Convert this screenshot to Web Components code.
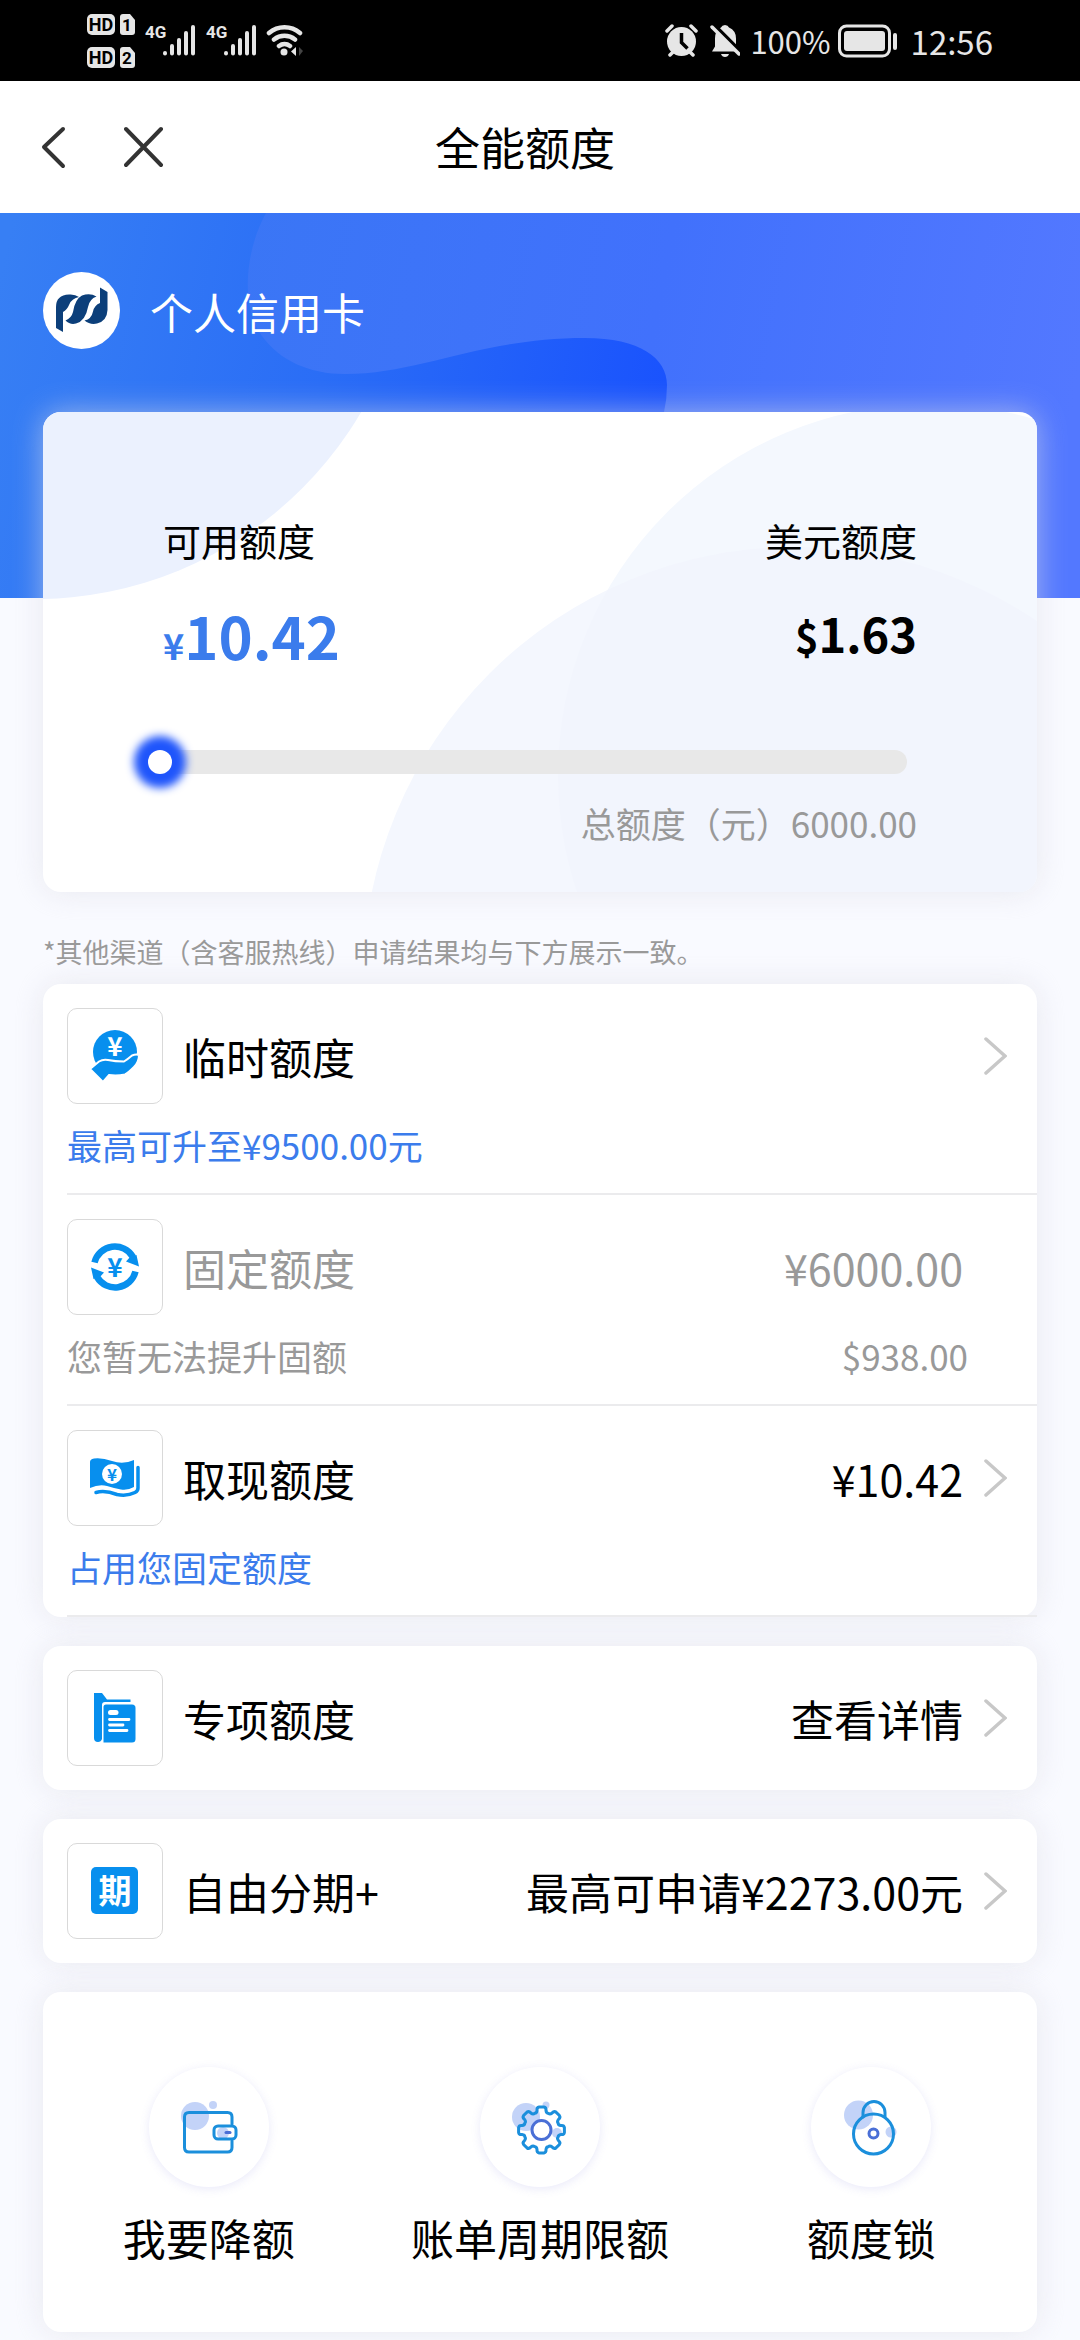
<!DOCTYPE html>
<html lang="zh-CN">
<head>
<meta charset="utf-8">
<meta name="viewport" content="width=device-width, initial-scale=1">
<title>全能额度</title>
<style>
  :root {
    --blue: #3b7cec;
    --icon: #078fee;
    --muted: #999;
    --card-shadow: 0 0 30px rgba(222, 222, 228, .6);
  }
  body {
    margin: 0;
    background: #f9faff;
    color: #000;
    font-family: "Noto Sans CJK SC", sans-serif;
    font-size: 43px;
  }
  main { display: flex; flex-direction: column; }
  .list { display: flex; flex-direction: column; gap: 29px; padding: 0 43px 8px; }
  .note { margin: 40px 43px 12px; font-size: 27px; line-height: 40px; color: var(--muted); }
</style>
</head>
<body>
<status-bar></status-bar>
<nav-bar>全能额度</nav-bar>
<main>
  <limit-hero>
    <span slot="name">个人信用卡</span>
    <limit-card available="10.42" usd="1.63" total="6000.00"></limit-card>
  </limit-hero>
  <p class="note">*其他渠道（含客服热线）申请结果均与下方展示一致。</p>
  <div class="list">
    <card-group>
      <limit-row icon="hand" link divided>临时额度<span slot="sub">最高可升至¥9500.00元</span></limit-row>
      <limit-row icon="cycle" muted divided>固定额度<span slot="value">¥6000.00</span><span slot="sub">您暂无法提升固额</span><span slot="subvalue">$938.00</span></limit-row>
      <limit-row icon="cash" link divided>取现额度<span slot="value">¥10.42</span><span slot="sub">占用您固定额度</span></limit-row>
    </card-group>
    <card-group>
      <limit-row icon="folder" link>专项额度<span slot="value">查看详情</span></limit-row>
    </card-group>
    <card-group>
      <limit-row icon="period" link>自由分期+<span slot="value">最高可申请¥2273.00元</span></limit-row>
    </card-group>
    <card-group>
      <tool-grid>
        <tool-item icon="wallet">我要降额</tool-item>
        <tool-item icon="gear">账单周期限额</tool-item>
        <tool-item icon="lock">额度锁</tool-item>
      </tool-grid>
    </card-group>
  </div>
</main>

<script>
class BaseElement extends HTMLElement {
  connectedCallback() {
    if (this.shadowRoot) return;
    const root = this.attachShadow({ mode: 'open' });
    root.innerHTML = '<style>*{box-sizing:border-box}svg{display:block}' + this.styles() + '</style>' + this.markup();
  }
}

const signal = x => `
  <text x="${x}" y="38" font-size="17">4G</text>
  <g stroke="#e6e6e6" stroke-width="4" stroke-linecap="round">
    <path d="M${x + 20} 53v.5M${x + 27} 46v7.5M${x + 34} 40v13.5M${x + 41} 33v20.5M${x + 48} 27v26.5"/>
  </g>`;
const sim = (y, n) => `
  <rect x="0" y="${y}" width="28" height="21" rx="5"/>
  <path d="M36 ${y}h7l5 6v12q0 3-3 3h-9q-3 0-3-3v-15q0-3 3-3z"/>
  <g fill="#000" text-anchor="middle"><text x="14" y="${y + 17}" font-size="18">HD</text>
  <text x="40" y="${y + 17}" font-size="17">${n}</text></g>`;

customElements.define('status-bar', class extends BaseElement {
  styles() { return `
    :host{display:flex;justify-content:space-between;align-items:center;height:81px;padding:0 87px;background:#000;color:#e6e6e6;font-size:33px;line-height:48px}
    .right{display:flex;align-items:center}
    .percent{font-size:31px}
    .power{margin:0 12px 0 7px}
    .bell{margin:0 10px 0 12px}
    text{font-family:Roboto,sans-serif;font-weight:700}`; }
  markup() { return `
    <svg width="216" height="81" fill="#e6e6e6" aria-label="信号">
      ${sim(14, 1)}${sim(47, 2)}${signal(58)}${signal(119)}
      <g fill="none" stroke="#e6e6e6" stroke-width="4.5" stroke-linecap="round">
        <path d="M182 33a24 24 0 0 1 31 0M187 39.500a17 17 0 0 1 21 0M192 46a9 9 0 0 1 11 0"/>
      </g>
      <circle cx="197" cy="52" r="3.500"/><path d="M209 47v9l-5-4.500z"/><path d="M212 47v9l4-5z" fill="#444"/>
    </svg>
    <div class="right">
      <svg width="33" height="34" viewBox="0 0 33 34" aria-label="闹钟">
        <circle cx="16.500" cy="17.500" r="14.500" fill="#e6e6e6"/>
        <path d="M2 7l5-5M31 7l-5-5M5 31l4-4M28 31l-4-4" stroke="#e6e6e6" stroke-width="3.500" stroke-linecap="round"/>
        <path d="M16.500 9v9.500l6 6" fill="none" stroke="#000" stroke-width="3.500"/>
      </svg>
      <svg class="bell" width="30" height="34" viewBox="0 0 30 34" aria-label="静音">
        <path d="M15 1q3 0 4 2.500q7 3 7 11v8l3 5H2l3-5v-8q0-8 6-11Q12 1 15 1zM11 30h8q-1 3-4 3t-4-3z" fill="#e6e6e6"/>
        <path d="M3 0l27 27" stroke="#000" stroke-width="4"/><path d="M2 3l27 27" stroke="#e6e6e6" stroke-width="3.500" stroke-linecap="round"/>
      </svg>
      <span class="percent">100%</span>
      <svg class="power" width="61" height="34" viewBox="0 0 61 34" aria-label="电量">
        <rect x="1.500" y="2" width="50" height="30" rx="7" fill="none" stroke="#e6e6e6" stroke-width="3"/>
        <rect x="6" y="7" width="41" height="20" rx="3" fill="#e6e6e6"/><rect x="55" y="9" width="4" height="17" rx="2" fill="#e6e6e6"/>
      </svg>
      <time>12:56</time>
    </div>`; }
});

customElements.define('nav-bar', class extends BaseElement {
  styles() { return `
    :host{display:grid;grid-template-columns:180px 1fr 210px;align-items:center;height:132px;background:#fff;font-size:45px}
    div{display:flex;gap:44px;padding-left:36px}
    button{border:0;background:none;padding:0;height:60px;width:44px;display:grid;place-items:center}
    h1{margin:0;font:inherit;line-height:64px;text-align:center}
    path{fill:none;stroke:#333;stroke-width:4;stroke-linecap:round;stroke-linejoin:round}`; }
  markup() { return `
    <div>
      <button aria-label="返回"><svg width="44" height="60"><path d="M27 12L8 30l19 19"/></svg></button>
      <button aria-label="关闭"><svg width="44" height="60"><path d="M2 12l35 36M37 12L2 48"/></svg></button>
    </div>
    <h1><slot></slot></h1><span></span>`; }
});

customElements.define('limit-hero', class extends BaseElement {
  styles() { return `
    :host{display:block;position:relative;padding:59px 43px 0}
    .bg{position:absolute;left:0;top:0;width:100%;height:385px}
    .head{position:relative;display:flex;align-items:center;gap:30px;margin-bottom:63px;color:#fff;line-height:60px}
    ::slotted(limit-card){position:relative}`; }
  markup() { return `
    <svg class="bg" viewBox="0 0 1080 385" preserveAspectRatio="none" aria-hidden="true">
      <defs>
        <linearGradient id="a" gradientUnits="userSpaceOnUse" x1="0" y1="60" x2="660" y2="200"><stop offset="0" stop-color="#377ff4"/><stop offset=".5" stop-color="#2a6df6"/><stop offset="1" stop-color="#1a53fd"/></linearGradient>
        <linearGradient id="b" gradientUnits="userSpaceOnUse" x1="240" y1="0" x2="1080" y2="160"><stop offset="0" stop-color="#3a76f5"/><stop offset=".5" stop-color="#4171fc"/><stop offset="1" stop-color="#5378ff"/></linearGradient>
      </defs>
      <path fill="url(#a)" d="M0 0H1080V385H0z"/>
      <path fill="url(#b)" d="M266 0C244 40 241 95 262 123C280 148 310 161 345 161C420 161 480 125 585 125C640 125 667 145 667 172Q667 200 655 225L640 385H1080V0z"/>
    </svg>
    <div class="head">
      <svg width="77" height="77" viewBox="0 0 77 77" aria-label="银行标志">
        <circle cx="38.500" cy="38.500" r="38.500" fill="#fff"/>
        <g fill="#0c3f7a">
          <path d="M13 56V35Q13 23 26 22.500Q32 22 36 25Q29 26.500 26.500 32Q24 38 20 40V60z"/>
          <path d="M22.500 48.500Q28.500 46 30 40Q32 27 39 23.500Q47 20.500 53.500 24.500Q46.500 27 45 35Q42.500 49 33 51.500Q27 53 22.500 48.500z"/>
          <path d="M41.500 48.500Q48.500 47 50 39.500Q51.500 33 57 31V15.500L64.500 20V38Q64 49 54 51.500Q47 53 41.500 48.500z"/>
        </g>
      </svg>
      <slot name="name"></slot>
    </div>
    <slot></slot>`; }
});

customElements.define('limit-card', class extends BaseElement {
  styles() { return `
    :host{display:block;border-radius:18px;background:#fff;overflow:hidden;box-shadow:var(--card-shadow);padding:103px 120px 44px}
    .bg{position:absolute;inset:0;width:100%;height:100%}
    .pair,.slide,.total{position:relative}
    .pair{display:flex;justify-content:space-between}
    dl{margin:0}
    dt{font-size:38px;line-height:50px;margin-bottom:30px}
    dd{margin:0;font-weight:700;font-size:58px;line-height:80px;color:var(--blue)}
    dd small{font-size:36px;line-height:1}
    .usd{text-align:right}
    .usd dd{font-size:47px;line-height:76px;color:#000}
    .usd small{font-size:40px}
    .slide{display:flex;margin:75px 10px 24px -16px;height:24px}
    input{appearance:none;-webkit-appearance:none;flex:1;min-width:0;margin:0;height:24px;border-radius:12px;background:#e8e8e8}
    input::-webkit-slider-thumb{-webkit-appearance:none;width:24px;height:24px;border-radius:50%;background:#fff;box-shadow:0 0 8px 14px #1f55fb}
    .total{font-size:35px;line-height:50px;text-align:right;color:var(--muted)}`; }
  markup() { return `
    <svg class="bg" viewBox="0 0 994 480" preserveAspectRatio="none" aria-hidden="true">
      <defs><clipPath id="c"><circle cx="886" cy="363" r="371"/></clipPath></defs>
      <circle cx="-8" cy="-191" r="378" fill="#ebf1fe"/>
      <circle cx="886" cy="363" r="371" fill="#f4f8fe"/>
      <circle cx="752" cy="567" r="432" fill="#f4f7fe"/>
      <circle cx="752" cy="567" r="432" fill="#f2f5fd" clip-path="url(#c)"/>
    </svg>
    <div class="pair">
      <dl><dt>可用额度</dt><dd><small>¥</small>${this.getAttribute('available')}</dd></dl>
      <dl class="usd"><dt>美元额度</dt><dd><small>$</small>${this.getAttribute('usd')}</dd></dl>
    </div>
    <div class="slide"><input type="range" min="0" max="${this.getAttribute('total')}" step="0.01" value="${this.getAttribute('available')}" aria-label="可用额度"></div>
    <div class="total">总额度（元）${this.getAttribute('total')}</div>`; }
});

customElements.define('card-group', class extends BaseElement {
  styles() { return `:host{display:block;background:#fff;border-radius:18px;box-shadow:var(--card-shadow)}`; }
  markup() { return '<slot></slot>'; }
});

const cycleArc = `<path d="M27.500 43.500A21 21 0 0 1 66 38" fill="none" stroke="#078fee" stroke-width="6.500"/><path d="M69.500 36L72 47.500L59 42.500L64 37z"/>`;
const rowIcons = {
  hand: `<circle cx="48" cy="44" r="22"/>
    <text x="48" y="48" font-size="26" fill="#fff">¥</text>
    <path d="M23 61L32 53.500Q36 51 41 52Q48 53.500 57 53.500Q61 51 65 47.500Q69 46 72 47Q72 54 67 59Q61 65 58 66.500Q50 68 42 67L36 74z" stroke="#fff" stroke-width="2"/>`,
  cycle: `${cycleArc}<g transform="rotate(180 48 48)">${cycleArc}</g>
    <text x="48" y="58" font-size="26">¥</text>`,
  cash: `<path d="M23 32Q23 29 27 28.500Q35 27.500 45 31Q56 35 67 30V57Q61 60.500 54 59.500Q47 58 40 56Q32 54 23 58z"/>
    <path d="M71 37.500V58Q71 61 68 62.500Q60 66.500 50 64.500Q38 60 29 62.500" fill="none" stroke="#078fee" stroke-width="3.500" stroke-linecap="round"/>
    <circle cx="45" cy="44" r="10" fill="#fff"/><text x="45" y="50.500" font-size="17">¥</text>`,
  folder: `<path d="M27 23H35L40 29.500H63.500V32H38Q35 32 35 35V69Q34 72 31 72Q27 72 27 68z"/>
    <path d="M39 34.500H65Q68.500 34.500 68.500 38V69Q68.500 72.500 65 72.500H36.500V37Q36.500 34.500 39 34.500z"/>
    <path d="M43.500 42.500H49" stroke="#fff" stroke-width="5" stroke-linecap="round"/>
    <path d="M42.500 49.500H62M42.500 55H56M42.500 60.500H60" stroke="#fff" stroke-width="2.800" stroke-linecap="round"/>`,
  period: `<rect x="24" y="24" width="47" height="47" rx="5"/><text x="48" y="60" font-size="33" fill="#fff">期</text>`
};

customElements.define('limit-row', class extends BaseElement {
  styles() {
    const muted = this.hasAttribute('muted');
    return `
    :host{display:block;padding:24px 0 0 24px}
    a,.row{display:block;color:${muted ? 'var(--muted)' : 'inherit'};text-decoration:none}
    .row{padding-bottom:24px}
    .divided{padding-bottom:7px;border-bottom:2px solid #ebebed}
    .line{display:flex;align-items:center;padding-right:30px}
    .icon{flex:none;width:96px;height:96px;border:1px solid #d9d9d9;border-radius:10px;margin-right:20px}
    .icon svg{margin:-1px;fill:var(--icon)}
    text{font-weight:700;text-anchor:middle}
    .label{flex:1;line-height:60px}
    .value{line-height:60px}
    .go{width:23px;margin-left:21px}
    .sub{display:flex;justify-content:space-between;font-size:35px;line-height:82px;padding-right:69px;color:${muted ? 'var(--muted)' : 'var(--blue)'}}`; }
  markup() {
    const divided = this.hasAttribute('divided');
    const link = this.hasAttribute('link');
    const inner = `
      <div class="line">
        <span class="icon"><svg width="96" height="96" viewBox="0 0 96 96" aria-hidden="true">${rowIcons[this.getAttribute('icon')]}</svg></span>
        <span class="label"><slot></slot></span>
        <span class="value"><slot name="value"></slot></span>
        <span class="go">${link ? '<svg width="23" height="40" viewBox="0 0 23 40"><path d="M2 3l19 17L2 37" fill="none" stroke="#c8c8c8" stroke-width="3.500" stroke-linecap="round"/></svg>' : ''}</span>
      </div>
      ${divided ? '<div class="sub"><slot name="sub"></slot><slot name="subvalue"></slot></div>' : ''}`;
    const cls = 'row' + (divided ? ' divided' : '');
    return link ? `<a class="${cls}" href="#">${inner}</a>` : `<div class="${cls}">${inner}</div>`;
  }
});

customElements.define('tool-grid', class extends BaseElement {
  styles() { return `:host{display:grid;grid-template-columns:repeat(3,1fr);padding:75px 0 63px}`; }
  markup() { return '<slot></slot>'; }
});

/* Eight-toothed gear outline around the given centre. */
function gearPath(cx, cy) {
  const at = (r, deg) => {
    const t = deg * Math.PI / 180;
    return (cx + r * Math.sin(t)).toFixed(1) + ' ' + (cy - r * Math.cos(t)).toFixed(1);
  };
  let d = 'M' + at(18, -22);
  for (let i = 0; i < 8; i++) {
    const m = i * 45;
    d += `Q${at(17.5, m - 16)} ${at(20, m - 13)}Q${at(23, m - 12)} ${at(23, m - 6)}L${at(23, m + 6)}Q${at(23, m + 12)} ${at(20, m + 13)}Q${at(17.5, m + 16)} ${at(18, m + 23)}`;
  }
  return d + 'z';
}

const toolIcons = {
  wallet: `<g fill="#c3d3f8"><circle cx="46" cy="49" r="14"/><circle cx="64" cy="38" r="4"/><circle cx="74" cy="66" r="6"/></g>
    <path d="M83 57V50q0-4.500-4.500-4.500H40q-4.500 0-4.500 4.500V80.500q0 4.500 4.500 4.500H78.500q4.500 0 4.500-4.500V74"/>
    <rect x="65" y="59" width="22" height="13" rx="4"/><path d="M77 65.500h4" stroke="#4a6fd6"/>`,
  gear: `<g fill="#c3d3f8"><circle cx="46" cy="50" r="14"/><circle cx="66" cy="38" r="3.500"/><circle cx="77" cy="66" r="5"/></g>
    <path d="${gearPath(61.5, 63)}"/><circle cx="61.500" cy="63" r="9.500" stroke="#4a6fd6" fill="#fff"/>`,
  lock: `<g fill="#c3d3f8"><circle cx="47.500" cy="48" r="14.500"/><circle cx="80" cy="65" r="5.500"/></g>
    <circle cx="62.500" cy="67" r="20"/><path d="M52 50V45.500a11 11 0 0 1 22 0V50"/><circle cx="62.500" cy="66.500" r="4.500" stroke="#4a6fd6"/>`
};

customElements.define('tool-item', class extends BaseElement {
  styles() { return `
    :host{display:flex;justify-content:center}
    button{display:flex;flex-direction:column;align-items:center;gap:18px;border:0;padding:0;background:none;font:inherit;color:inherit;line-height:64px;white-space:nowrap}
    .disc{width:120px;height:120px;border-radius:50%;background:#fff;box-shadow:0 2px 10px rgba(120,120,220,.16)}
    svg{fill:none;stroke:#1b8fdc;stroke-width:3;stroke-linecap:round}
    svg g{stroke:none}`; }
  markup() { return `
    <button><span class="disc"><svg width="120" height="120" viewBox="0 0 120 120" aria-hidden="true">${toolIcons[this.getAttribute('icon')]}</svg></span><span><slot></slot></span></button>`; }
});
</script>
</body>
</html>
